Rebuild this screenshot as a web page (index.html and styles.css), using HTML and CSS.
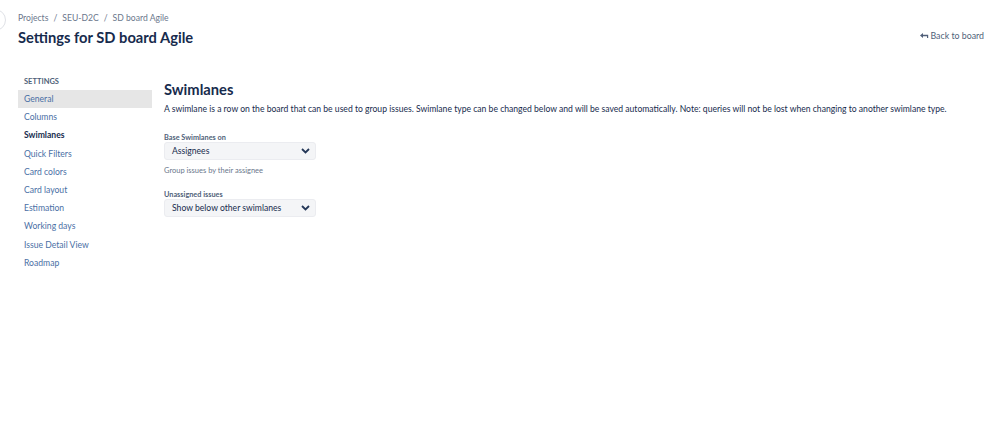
FILE: index.html
```html
<!DOCTYPE html>
<html lang="en">
<head>
    <meta charset="UTF-8">
    <title>Settings for SD board Agile</title>
    <link rel="stylesheet" href="styles.css">
</head>
<body>
    <div class="edge-circle"></div>
    <header class="page-header">
        <div class="header-left">
            <div class="breadcrumbs">
                <a href="#">Projects</a><span class="sep">/</span><a href="#">SEU-D2C</a><span class="sep">/</span><a href="#">SD board Agile</a>
            </div>
            <h1>Settings for SD board Agile</h1>
        </div>
        <a href="#" class="back-link">
            <svg width="9" height="6" viewBox="0 0 9 6"><path d="M0 2.5 L3 0 L3 1.7 L8.2 1.7 L8.2 5 L7 5 L7 3.3 L3 3.3 L3 5 Z" fill="#505f79"/></svg>Back to board
        </a>
    </header>
    <div class="layout">
        <nav class="sidebar">
            <div class="sidebar-title">SETTINGS</div>
            <a href="#" class="nav-item hover">General</a>
            <a href="#" class="nav-item">Columns</a>
            <a href="#" class="nav-item active">Swimlanes</a>
            <a href="#" class="nav-item">Quick Filters</a>
            <a href="#" class="nav-item">Card colors</a>
            <a href="#" class="nav-item">Card layout</a>
            <a href="#" class="nav-item">Estimation</a>
            <a href="#" class="nav-item">Working days</a>
            <a href="#" class="nav-item">Issue Detail View</a>
            <a href="#" class="nav-item">Roadmap</a>
        </nav>
        <main class="content">
            <h2>Swimlanes</h2>
            <p class="desc">A swimlane is a row on the board that can be used to group issues. Swimlane type can be changed below and will be saved automatically. Note: queries will not be lost when changing to another swimlane type.</p>
            <div class="field">
                <label>Base Swimlanes on</label>
                <div class="select">
                    <span>Assignees</span>
                    <svg width="9" height="6" viewBox="0 0 9 6"><path d="M1 1 L4.5 4.5 L8 1" fill="none" stroke="#253858" stroke-width="1.8"/></svg>
                </div>
                <div class="help">Group issues by their assignee</div>
            </div>
            <div class="field">
                <label>Unassigned issues</label>
                <div class="select">
                    <span>Show below other swimlanes</span>
                    <svg width="9" height="6" viewBox="0 0 9 6"><path d="M1 1 L4.5 4.5 L8 1" fill="none" stroke="#253858" stroke-width="1.8"/></svg>
                </div>
            </div>
        </main>
    </div>
</body>
</html>
```
FILE: styles.css
```css
*{
    box-sizing: border-box;
    margin: 0;
    padding: 0;
}
body{
    font-family: Lato, "Noto Sans", sans-serif;
    color: #172b4d;
    background: #fff;
    width: 998px;
    height: 426px;
    overflow: hidden;
    position: relative;
}
a{
    text-decoration: none;
}
.edge-circle{
    position: absolute;
    left: -16px;
    top: 9px;
    width: 22px;
    height: 22px;
    border-radius: 50%;
    border: 1px solid #dfe1e6;
    background: #fff;
}
.page-header{
    display: flex;
    justify-content: space-between;
    align-items: flex-end;
    padding: 12px 13px 0 18px;
}
.breadcrumbs{
    font-size: 8.6px;
    line-height: 12px;
    color: #6b778c;
}
.breadcrumbs a{
    color: #6b778c;
}
.sep{
    margin: 0 5px;
}
h1{
    font-size: 14.7px;
    font-weight: 700;
    line-height: 20px;
    margin-top: 3px;
    color: #172b4d;
}
.back-link{
    font-size: 8.8px;
    color: #505f79;
    display: flex;
    align-items: center;
    gap: 1px;
    margin-bottom: 6px;
    margin-right: 1px;
}
.layout{
    display: flex;
    padding: 0 0 0 18px;
    margin-top: 29px;
}
.sidebar{
    width: 134px;
    flex-shrink: 0;
    display: flex;
    flex-direction: column;
}
.sidebar-title{
    font-size: 7.5px;
    font-weight: 700;
    color: #505f79;
    padding-left: 6px;
    line-height: 12px;
    margin-bottom: 2px;
}
.nav-item{
    font-size: 8.6px;
    color: #4a6fa5;
    line-height: 18.2px;
    height: 18.2px;
    padding-left: 6px;
}
.nav-item.hover{
    background: #e6e6e6;
}
.nav-item.active{
    color: #172b4d;
    font-weight: 700;
}
.content{
    padding-left: 12px;
    padding-top: 3px;
}
h2{
    font-size: 14.7px;
    font-weight: 700;
    line-height: 20px;
}
.desc{
    font-size: 8.6px;
    line-height: 12px;
    margin-top: 4px;
    color: #172b4d;
}
.field{
    margin-top: 18px;
}
.field label{
    display: block;
    font-size: 7.3px;
    font-weight: 700;
    color: #505f79;
    line-height: 9px;
}
.select{
    width: 152px;
    height: 18px;
    background: #f4f5f7;
    border: 1px solid #ebecf0;
    border-radius: 3px;
    display: flex;
    align-items: center;
    justify-content: space-between;
    padding: 0 5px 0 7px;
    font-size: 8.6px;
    color: #172b4d;
}
.help{
    font-size: 7.5px;
    color: #6b778c;
    line-height: 10px;
    margin-top: 6px;
}
.field + .field{
    margin-top: 14px;
}
```
